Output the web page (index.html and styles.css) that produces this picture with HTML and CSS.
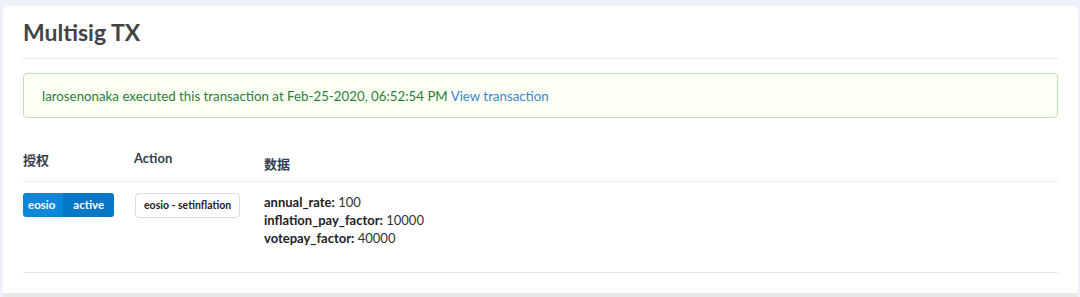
FILE: index.html
```html
<!DOCTYPE html>
<html lang="zh">
<head>
  <meta charset="UTF-8">
  <title>Multisig TX</title>
  <link rel="stylesheet" href="styles.css">
</head>
<body>
  <div class="page">
    <div class="card">
      <h1 class="title">Multisig TX</h1>

      <div class="alert">
        larosenonaka executed this transaction at Feb-25-2020, 06:52:54 PM
        <a href="#" class="alert-link">View transaction</a>
      </div>

      <table class="tx-table">
        <thead>
          <tr>
            <th class="col-auth">授权</th>
            <th class="col-action">Action</th>
            <th class="col-data"><span class="th-low">数据</span></th>
          </tr>
        </thead>
        <tbody>
          <tr>
            <td>
              <span class="perm">
                <span class="perm-actor">eosio</span><span class="perm-name">active</span>
              </span>
            </td>
            <td>
              <span class="action-chip">eosio - setinflation</span>
            </td>
            <td class="data">
              <div><b>annual_rate:</b> 100</div>
              <div><b>inflation_pay_factor:</b> 10000</div>
              <div><b>votepay_factor:</b> 40000</div>
            </td>
          </tr>
        </tbody>
      </table>
    </div>
  </div>
</body>
</html>
```

FILE: styles.css
```css
html, body {
  margin: 0;
  padding: 0;
  height: 100%;
}
body {
  font-family: 'Lato', 'Noto Sans CJK SC', sans-serif;
  background: #eef1f9;
  color: #333;
}
.page {
  padding: 6px 2px 0 3px;
  height: 100%;
  box-sizing: border-box;
}
.card {
  background: #fff;
  border-radius: 6px 6px 0 0;
  padding: 11px 20px 20px 20px;
  height: 287px;
  box-sizing: border-box;
  box-shadow: 0 4px 0 0 #e8e8e8;
}
.title {
  margin: 0;
  font-size: 23px;
  font-weight: 700;
  color: #444;
  line-height: 30px;
  padding-bottom: 11px;
  border-bottom: 1px solid #e6e6e6;
}
.alert {
  margin-top: 14px;
  border: 1px solid #bfe0b4;
  background: #fbfff4;
  border-radius: 4px;
  padding: 13px 18px 12px 18px;
  font-size: 13.3px;
  line-height: 18px;
  color: #2d7d3a;
}
.alert-link {
  color: #3b86cf;
  text-decoration: none;
}
.tx-table {
  width: 100%;
  margin-top: 32px;
  border-collapse: collapse;
}
.tx-table th {
  text-align: left;
  font-size: 13px;
  font-weight: 700;
  color: #34404f;
  padding: 0 0 8px 0;
  vertical-align: top;
  border-bottom: 1px solid #ececec;
}
.th-low {
  display: inline-block;
  padding-top: 4px;
}
.col-auth {
  width: 111px;
}
.col-action {
  width: 130px;
}
.tx-table td {
  padding: 11px 0 25px 0;
  vertical-align: top;
  border-bottom: 1px solid #e6e6e6;
}
.perm {
  display: inline-flex;
  border-radius: 3px;
  overflow: hidden;
  font-size: 11.5px;
  font-weight: 700;
  color: #fff;
  line-height: 24px;
}
.perm-actor {
  background: #0b87d9;
  padding: 0 8px 0 5px;
}
.perm-name {
  background: #0677c8;
  padding: 0 10px;
}
.action-chip {
  display: inline-block;
  border: 1px solid #dcdcdc;
  border-radius: 4px;
  font-size: 10.5px;
  font-weight: 700;
  color: #222;
  line-height: 23px;
  padding: 0 8px;
  margin-left: 1px;
}
.data {
  font-size: 13px;
  line-height: 18px;
  color: #333;
}
.data b {
  color: #222;
}
```
